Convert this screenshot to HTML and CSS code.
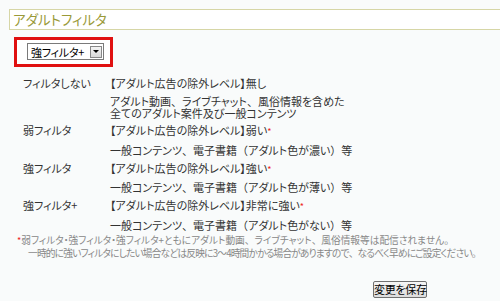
FILE: index.html
```html
<!DOCTYPE html>
<html lang="ja">
<head>
<meta charset="utf-8">
<link rel="stylesheet" href="styles.css">
</head>
<body>
<div class="header">アダルトフィルタ</div>
<div class="filterbox">
  <div class="select">
    <span class="select-text">強フィルタ+</span>
    <span class="select-btn"><span class="tri"></span></span>
  </div>
</div>
<div class="table">
  <div class="label">フィルタしない</div><div class="level">【アダルト広告の除外レベル】無し</div>
  <div></div><div class="desc">アダルト動画<span class="fw">、</span>ライブチャット<span class="fw">、</span>風俗情報を含めた<br>全てのアダルト案件及び一般コンテンツ</div>
  <div class="label">弱フィルタ</div><div class="level">【アダルト広告の除外レベル】弱い<span class="ast">*</span></div>
  <div></div><div class="desc">一般コンテンツ<span class="fw">、</span>電子書籍<span class="fw">（</span>アダルト色が濃い<span class="fw">）</span>等</div>
  <div class="label">強フィルタ</div><div class="level">【アダルト広告の除外レベル】強い<span class="ast">*</span></div>
  <div></div><div class="desc">一般コンテンツ<span class="fw">、</span>電子書籍<span class="fw">（</span>アダルト色が薄い<span class="fw">）</span>等</div>
  <div class="label">強フィルタ+</div><div class="level">【アダルト広告の除外レベル】非常に強い<span class="ast">*</span></div>
  <div></div><div class="desc">一般コンテンツ<span class="fw">、</span>電子書籍<span class="fw">（</span>アダルト色がない<span class="fw">）</span>等</div>
</div>
<div class="notes">
  <div class="note1"><span class="ast">*</span>弱フィルタ・強フィルタ・強フィルタ+ともにアダルト動画<span class="fw">、</span>ライブチャット<span class="fw">、</span>風俗情報等は配信されません<span class="fw">。</span></div>
  <div class="note2">一時的に強いフィルタにしたい場合などは反映に3～4時間かかる場合がありますので<span class="fw">、</span>なるべく早めにご設定ください<span class="fw">。</span></div>
</div>
<div class="actions"><button class="save">変更を保存</button></div>
</body>
</html>
```
FILE: styles.css
```css
html, body {
  margin: 0;
  padding: 0;
  background: #f9fbfb;
}
body {
  font-family: "Noto Sans CJK JP", "Liberation Sans", sans-serif;
  font-feature-settings: "palt";
  font-size: 11px;
  color: #333;
  overflow: hidden;
}
.fw {
  font-feature-settings: normal;
}
.header {
  margin: 9px 0 0 9px;
  height: 19px;
  line-height: 19px;
  border: 1px solid #d6d6a6;
  border-right: none;
  background: #fff;
  color: #9a9a38;
  font-size: 13.5px;
  padding-left: 3px;
}
.filterbox {
  display: inline-block;
  margin: 7px 0 0 14px;
  border: 3px solid #e01010;
  padding: 3px 6px 4px 10px;
  background: #fff;
}
.select {
  box-sizing: border-box;
  width: 77px;
  height: 17px;
  border: 1px solid #7a7a7a;
  background: #fff;
  display: flex;
  align-items: center;
  justify-content: space-between;
  padding: 0 1px 0 3px;
  color: #000;
  font-size: 11px;
  letter-spacing: -0.2px;
  white-space: nowrap;
}
.select-btn {
  box-sizing: border-box;
  width: 12px;
  height: 12px;
  border: 1px solid #888;
  background: linear-gradient(#f4f4f4, #d8d8d8);
  display: flex;
  align-items: center;
  justify-content: center;
}
.tri {
  width: 0;
  height: 0;
  border-left: 3px solid transparent;
  border-right: 3px solid transparent;
  border-top: 3px solid #000;
}
.table {
  display: grid;
  grid-template-columns: 87px 1fr;
  margin: 7px 0 0 23px;
  line-height: 12px;
}
.table > div {
  padding: 3px 0 2.7px;
}
.ast {
  color: #e22;
  font-size: 9px;
}
.notes {
  margin-top: 0;
  line-height: 12px;
  color: #888;
  font-size: 9.7px;
  white-space: nowrap;
}
.note1 {
  padding-left: 17px;
}
.note2 {
  padding-left: 28px;
  letter-spacing: -0.8px;
}
.actions {
  display: flex;
  padding: 22px 0 0 373px;
}
.save {
  font-family: "Noto Sans CJK JP", sans-serif;
  font-feature-settings: "palt";
  font-size: 11px;
  letter-spacing: -0.3px;
  white-space: nowrap;
  width: 54px;
  height: 17px;
  padding: 0;
  line-height: 14px;
  color: #000;
  border: 1px solid #707070;
  border-radius: 2px;
  background: linear-gradient(#f6f6f6, #dcdcdc);
}
```
